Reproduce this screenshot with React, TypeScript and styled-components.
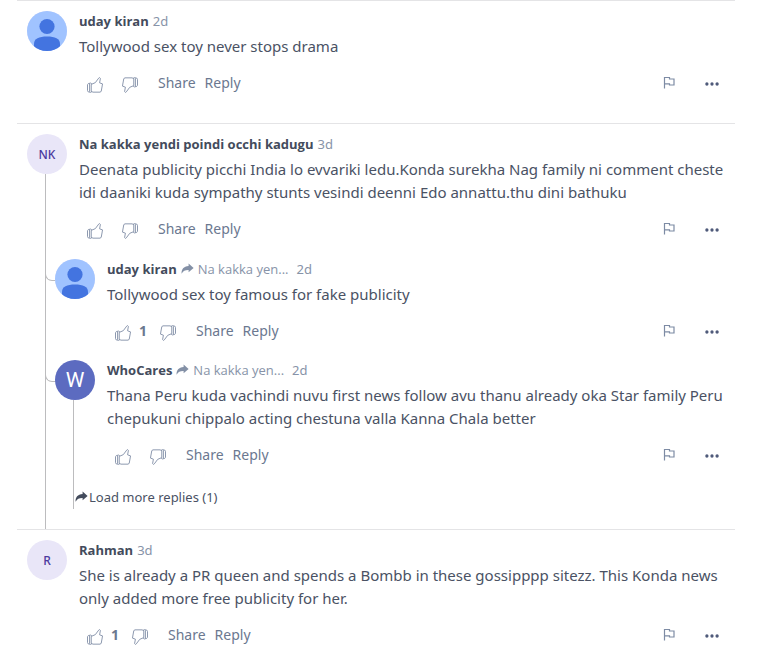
import React from "react";
import styled, { createGlobalStyle, css } from "styled-components";

const GlobalStyle = createGlobalStyle`
  *, *::before, *::after { box-sizing: border-box; }
  body {
    margin: 0;
    background: #fff;
    color: #4a5264;
    font-family: "Noto Sans", "Open Sans", sans-serif;
    font-size: 15px;
    line-height: 23px;
  }
  button { font: inherit; color: inherit; background: none; border: 0; padding: 0; cursor: pointer; }
`;

const List = styled.main`
  margin: 0 33px 0 17px;
`;

const Thread = styled.section<{ $roomy?: boolean }>`
  border-top: 1px solid #e4e4e6;
  padding: 10px 10px ${(p) => (p.$roomy ? 24 : 20)}px;
`;

const guide = css`
  content: "";
  position: absolute;
  left: 18px;
  top: 40px;
  width: 1px;
  background: #bcbcbe;
`;

const Branch = styled.div`
  position: relative;
  &::before { ${guide} bottom: -20px; }
`;

const Replies = styled.div`
  padding: 14px 0 0 28px;
  display: grid;
  gap: 13px;
`;

const ReplyItem = styled.div<{ $open?: boolean }>`
  position: relative;
  &::before {
    content: "";
    position: absolute;
    left: -10px;
    top: 14px;
    width: 12px;
    height: 8px;
    border: solid #bcbcbe;
    border-width: 0 0 1px 1px;
    border-bottom-left-radius: 7px;
  }
  ${(p) => p.$open && css`&::after { ${guide} bottom: 0; }`}
`;

const Row = styled.article`
  display: grid;
  grid-template-columns: 40px minmax(0, 1fr);
  column-gap: 12px;
  align-items: start;
`;

const Avatar = styled.div<{ $tone: "lilac" | "indigo" | "photo" }>`
  position: relative;
  z-index: 1;
  display: flex;
  align-items: center;
  justify-content: center;
  width: 40px;
  height: 40px;
  border-radius: 50%;
  overflow: hidden;
  font-size: 12px;
  font-weight: 500;
  background: #e9e6f8;
  color: #4c3a9e;
  ${(p) => p.$tone === "indigo" && css`
    background: #5c6bc0;
    color: #fff;
    font-family: Roboto, sans-serif;
    font-size: 21px;
    font-weight: 400;
  `}
`;

const Head = styled.header`
  display: flex;
  align-items: center;
  height: 20px;
  margin-bottom: 4px;
  font-size: 13px;
  line-height: 20px;
  color: #8793a8;
`;

const Name = styled.strong`
  color: #434b5c;
  font-family: "Open Sans", "Noto Sans", sans-serif;
  font-weight: 700;
  margin-right: 4px;
`;

const Target = styled.span`
  font-family: "Open Sans", "Noto Sans", sans-serif;
  margin: 0 8px 0 4px;
`;

const Body = styled.p`
  margin: 0;
`;

const Actions = styled.div`
  display: flex;
  align-items: center;
  height: 30px;
  margin-top: 11px;
  padding: 0 6px 0 8px;
  font-size: 14px;
  color: #6b7890;
`;

const Vote = styled.button`
  display: flex;
  align-items: center;
  height: 20px;
  margin-right: 20px;
  svg { margin-top: 2px; }
`;

const Up = styled(Vote)<{ $counted: boolean }>`
  margin-right: ${(p) => (p.$counted ? 13 : 19)}px;
`;

const Count = styled.b`
  height: 20px;
  line-height: 18px;
  margin-left: 8px;
`;

const TextButton = styled.button`
  margin-right: 9px;
  padding-bottom: 2px;
  line-height: 20px;
`;

const Tools = styled.div`
  display: flex;
  align-items: center;
  gap: 30px;
  margin-left: auto;
`;

const IconButton = styled.button`
  display: flex;
`;

const FlagButton = styled(IconButton)`
  padding-bottom: 3px;
`;

const LoadMore = styled.button`
  display: flex;
  align-items: center;
  gap: 1px;
  height: 24px;
  margin: 14px 0 0 20px;
  font-size: 13px;
`;

function Thumb({ down }: { down?: boolean }) {
  return (
    <svg width="16" height="16" viewBox="0 0 16 17" preserveAspectRatio="none" fill="none" stroke="#7c8aa3" strokeWidth="0.9" strokeLinejoin="round" strokeLinecap="round" aria-hidden="true">
      <g transform={down ? "rotate(180 8 8.5)" : undefined}>
        <path d="M4.600 7.700 8.300 6 11.700 1.200 12.600.6 13.400 1.500 12.600 6.200 15.500 7.300 15.200 9.500 14.200 15.300 13 16.100H6L4.600 15.500Z" />
        <path d="M4.600 7.200 3.600 6.400 2.600 7.200V15.400L3.600 16.400 4.600 15.700M2.600 6.700 1.400 6.900.5 8.200V14.500L1.300 15.900 2.600 16.100" />
      </g>
    </svg>
  );
}

function Person() {
  return (
    <svg width="40" height="40" viewBox="0 0 40 40" aria-hidden="true">
      <rect width="40" height="40" fill="#a0c3ff" />
      <circle cx="20" cy="15.500" r="7.600" fill="#4374e0" />
      <path d="M7 40V33C7 27.500 12 25.500 20 25.500S33 27.500 33 33V40Z" fill="#4374e0" />
    </svg>
  );
}

function Arrow({ color }: { color: string }) {
  return (
    <svg width="13" height="12" viewBox="0 0 13 12" fill={color} aria-hidden="true">
      <path d="M7.600.6 12.600 4.900 7.600 9.200V6.900C4.300 6.800 2.200 7.700.6 10.800.2 6.200 2.700 3.200 7.600 2.900Z" />
    </svg>
  );
}

function Flag() {
  return (
    <svg width="12" height="13" viewBox="0 0 12 13" fill="none" stroke="#7d8ba4" strokeWidth="1.200" aria-hidden="true">
      <path d="M1.500 12.500V1.500H6.500V3H11V9H6.500V7.800H1.500" />
    </svg>
  );
}

function Dots() {
  return (
    <svg width="14" height="4" viewBox="0 0 14 4" fill="#4f5a7a" aria-hidden="true">
      <circle cx="1.900" cy="2" r="1.650" />
      <circle cx="7" cy="2" r="1.650" />
      <circle cx="12.100" cy="2" r="1.650" />
    </svg>
  );
}

interface CommentProps {
  name: string;
  age: string;
  text: string;
  initials?: string;
  tone?: "lilac" | "indigo" | "photo";
  target?: string;
  likes?: number;
}

function Comment({ name, age, text, initials, tone = "lilac", target, likes }: CommentProps) {
  return (
    <Row>
      <Avatar $tone={tone}>{tone === "photo" ? <Person /> : initials}</Avatar>
      <div>
        <Head>
          <Name>{name}</Name>
          {target && (
            <>
              <Arrow color="#8390a6" />
              <Target>{target}</Target>
            </>
          )}
          <time>{age}</time>
        </Head>
        <Body>{text}</Body>
        <Actions>
          <Up $counted={!!likes} aria-label="Like">
            <Thumb />
            {likes && <Count>{likes}</Count>}
          </Up>
          <Vote aria-label="Dislike"><Thumb down /></Vote>
          <TextButton>Share</TextButton>
          <TextButton>Reply</TextButton>
          <Tools>
            <FlagButton aria-label="Report"><Flag /></FlagButton>
            <IconButton aria-label="More"><Dots /></IconButton>
          </Tools>
        </Actions>
      </div>
    </Row>
  );
}

export default function App() {
  return (
    <>
      <GlobalStyle />
      <List>
        <Thread $roomy>
          <Comment name="uday kiran" age="2d" tone="photo" text="Tollywood sex toy never stops drama" />
        </Thread>
        <Thread>
          <Branch>
            <Comment
              name="Na kakka yendi poindi occhi kadugu"
              age="3d"
              initials="NK"
              text="Deenata publicity picchi India lo evvariki ledu.Konda surekha Nag family ni comment cheste idi daaniki kuda sympathy stunts vesindi deenni Edo annattu.thu dini bathuku"
            />
            <Replies>
              <ReplyItem>
                <Comment name="uday kiran" age="2d" tone="photo" target="Na kakka yen..." likes={1} text="Tollywood sex toy famous for fake publicity" />
              </ReplyItem>
              <ReplyItem $open>
                <Comment
                  name="WhoCares"
                  age="2d"
                  tone="indigo"
                  initials="W"
                  target="Na kakka yen..."
                  text="Thana Peru kuda vachindi nuvu first news follow avu thanu already oka Star family Peru chepukuni chippalo acting chestuna valla Kanna Chala better"
                />
                <LoadMore><Arrow color="#434b5c" />Load more replies (1)</LoadMore>
              </ReplyItem>
            </Replies>
          </Branch>
        </Thread>
        <Thread>
          <Comment
            name="Rahman"
            age="3d"
            initials="R"
            likes={1}
            text="She is already a PR queen and spends a Bombb in these gossipppp sitezz. This Konda news only added more free publicity for her."
          />
        </Thread>
      </List>
    </>
  );
}
